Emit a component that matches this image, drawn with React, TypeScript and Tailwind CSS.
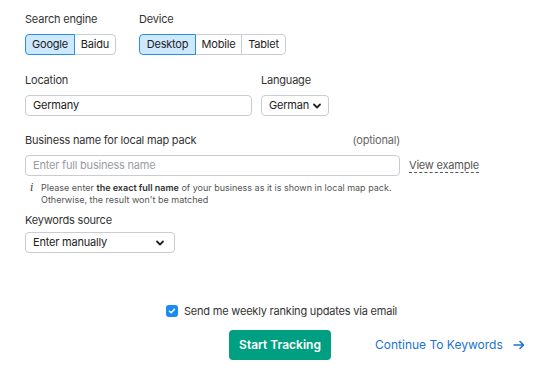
import React from "react";

const Chevron = () => (
  <svg width="10" height="10" viewBox="0 0 10 10" className="shrink-0">
    <path d="M2 3.5 L5 6.5 L8 3.5" fill="none" stroke="#222" strokeWidth="1.8" strokeLinecap="round" strokeLinejoin="round" />
  </svg>
);

type ToggleProps = { items: { label: string; w: string }[]; active: number };

const Toggle: React.FC<ToggleProps> = ({ items, active }) => (
  <div className="flex h-[21px]">
    {items.map((it, i) => (
      <div
        key={it.label}
        className={
          "flex items-center justify-center border " +
          it.w +
          " " +
          (i === 0 ? "rounded-l-[4px] " : "-ml-px ") +
          (i === items.length - 1 ? "rounded-r-[4px] " : "") +
          (i === active
            ? "bg-[#cde9ff] border-[#2b8ee0] text-[#222] z-10"
            : "bg-white border-[#c9ccd3] text-[#222]")
        }
      >
        {it.label}
      </div>
    ))}
  </div>
);

export default function App() {
  return (
    <div
      className="w-[557px] h-[374px] bg-white text-[#333] pl-[25px] pt-[11px] text-[11px] tracking-[-0.2px]"
      style={{ fontFamily: "Inter, 'Noto Sans', sans-serif" }}
    >
      <div className="flex">
        <div>
          <div className="leading-[16px]">Search engine</div>
          <div className="mt-[7px]">
            <Toggle
              active={0}
              items={[
                { label: "Google", w: "w-[50px]" },
                { label: "Baidu", w: "w-[42px]" },
              ]}
            />
          </div>
        </div>
        <div className="ml-[23px]">
          <div className="leading-[16px]">Device</div>
          <div className="mt-[7px]">
            <Toggle
              active={0}
              items={[
                { label: "Desktop", w: "w-[57px]" },
                { label: "Mobile", w: "w-[47px]" },
                { label: "Tablet", w: "w-[45px]" },
              ]}
            />
          </div>
        </div>
      </div>

      <div className="flex mt-[17px]">
        <div>
          <div className="leading-[16px]">Location</div>
          <div className="mt-[7px] w-[227px] h-[21px] border border-[#c9ccd3] rounded-[4px] px-[7px] flex items-center text-[#222]">
            Germany
          </div>
        </div>
        <div className="ml-[9px]">
          <div className="leading-[16px]">Language</div>
          <div className="mt-[7px] w-[68px] h-[21px] border border-[#c9ccd3] rounded-[4px] pl-[7px] pr-[6px] flex items-center justify-between text-[#222]">
            German
            <Chevron />
          </div>
        </div>
      </div>

      <div className="mt-[16px] w-[375px] flex justify-between leading-[16px]">
        <span>Business name for local map pack</span>
        <span className="text-[#666]">(optional)</span>
      </div>
      <div className="flex items-center mt-[7px]">
        <div className="w-[375px] h-[21px] border border-[#c9ccd3] rounded-[4px] px-[7px] flex items-center text-[#9a9ca4]">
          Enter full business name
        </div>
        <span className="ml-[9px] text-[#555] border-b border-dashed border-[#555] leading-[14px]">
          View example
        </span>
      </div>

      <div className="flex mt-[6px] text-[9px] tracking-normal leading-[12px] text-[#555]">
        <span className="w-[16px] pl-[5px] text-[11px] text-[#444] italic" style={{ fontFamily: "'DejaVu Serif', serif" }}>
          i
        </span>
        <div>
          Please enter <b className="font-semibold text-[#333]">the exact full name</b> of your business as it is shown in local map pack.
          <br />
          Otherwise, the result won't be matched
        </div>
      </div>

      <div className="mt-[6px] leading-[16px]">Keywords source</div>
      <div className="mt-[4px] w-[150px] h-[21px] border border-[#c9ccd3] rounded-[4px] pl-[7px] pr-[9px] flex items-center justify-between text-[#222]">
        Enter manually
        <Chevron />
      </div>

      <div className="flex items-center mt-[50px] ml-[141px]">
        <div className="w-[12px] h-[12px] rounded-[3px] bg-[#1a8cf0] flex items-center justify-center">
          <svg width="8" height="8" viewBox="0 0 8 8">
            <path d="M1.5 4.2 L3.2 5.8 L6.5 2.3" fill="none" stroke="white" strokeWidth="1.5" strokeLinecap="round" strokeLinejoin="round" />
          </svg>
        </div>
        <span className="ml-[6px] text-[#333]">Send me weekly ranking updates via email</span>
      </div>

      <div className="flex items-center mt-[10px] ml-[204px] tracking-normal">
        <button className="w-[102px] h-[30px] rounded-[4px] bg-[#009f81] text-white text-[12px] font-semibold">
          Start Tracking
        </button>
        <div className="ml-[44px] flex items-center text-[#1a73d0] text-[12px]">
          Continue To Keywords
          <svg width="12" height="10" viewBox="0 0 12 10" className="ml-[10px]">
            <path d="M1 5 H10.5 M7 1.5 L10.5 5 L7 8.5" fill="none" stroke="#1a73d0" strokeWidth="1.6" strokeLinecap="round" strokeLinejoin="round" />
          </svg>
        </div>
      </div>
    </div>
  );
}
